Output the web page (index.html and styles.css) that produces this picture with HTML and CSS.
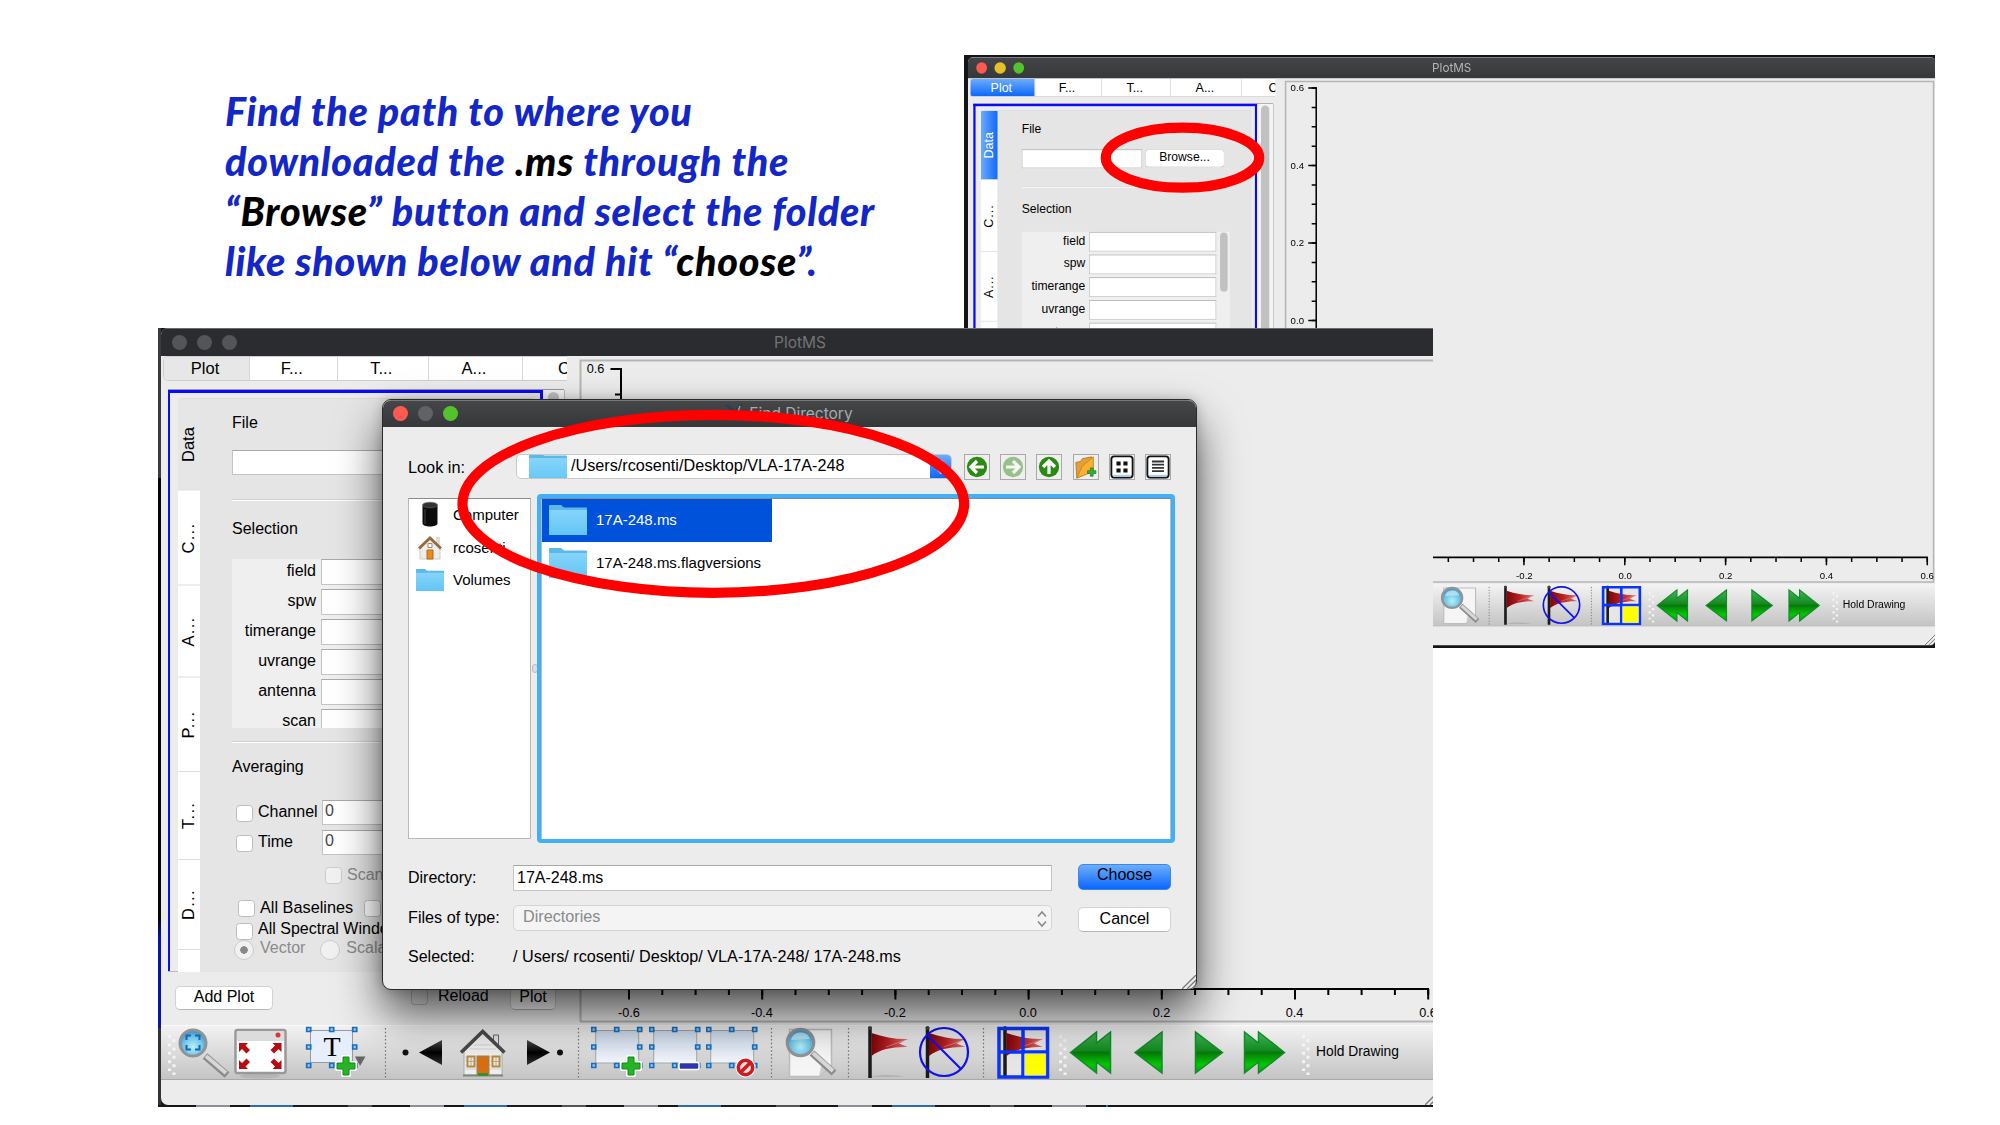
FILE: index.html
```html
<!DOCTYPE html>
<html lang="en">
<head>
<meta charset="utf-8">
<title>PlotMS: choosing a measurement set</title>
<link rel="stylesheet" href="styles.css">
</head>
<body>
<svg class="defs" width="0" height="0" aria-hidden="true">
  <defs>
    <linearGradient id="g-green" x1="0" y1="0" x2="0" y2="1">
      <stop offset="0" stop-color="#3fb457"/><stop offset=".45" stop-color="#138a1f"/><stop offset=".5" stop-color="#067a0a"/><stop offset=".8" stop-color="#05c805"/><stop offset="1" stop-color="#0a9a14"/>
    </linearGradient>
    <linearGradient id="g-red" x1="0" y1="0" x2="1" y2="0">
      <stop offset="0" stop-color="#7d0507"/><stop offset=".45" stop-color="#b51f22"/><stop offset="1" stop-color="#e0706f"/>
    </linearGradient>
    <linearGradient id="g-folder" x1="0" y1="0" x2="0" y2="1">
      <stop offset="0" stop-color="#86d4fb"/><stop offset="1" stop-color="#62c5f5"/>
    </linearGradient>
    <linearGradient id="g-region" x1="0" y1="0" x2="0" y2="1">
      <stop offset="0" stop-color="#ccd9ea"/><stop offset="1" stop-color="#f2f6fb"/>
    </linearGradient>
    <linearGradient id="g-black" x1="0" y1="0" x2="0" y2="1">
      <stop offset="0" stop-color="#4a4a4a"/><stop offset=".5" stop-color="#000"/><stop offset="1" stop-color="#333"/>
    </linearGradient>
    <radialGradient id="g-lens" cx=".5" cy=".65" r=".65">
      <stop offset="0" stop-color="#b5f0fb"/><stop offset=".6" stop-color="#6cc3e6"/><stop offset="1" stop-color="#2f86bf"/>
    </radialGradient>
  </defs>
  <symbol id="i-grip" viewBox="0 0 15 54">
    <path d="M7.500 10v36" stroke="#f4f4f4" stroke-width="3" stroke-dasharray="3 5.400"/>
    <path d="M12 14v36" stroke="#f4f4f4" stroke-width="3" stroke-dasharray="3 5.400"/>
  </symbol>
  <symbol id="i-sep" viewBox="0 0 15 54">
    <path d="M7.500 3v50" stroke="#777" stroke-width="1.200" stroke-dasharray="1.500 2.200"/>
  </symbol>
  <symbol id="i-zoom" viewBox="0 0 54 54">
    <path d="M27 31l22 19" stroke="#8b8b8b" stroke-width="7"/>
    <path d="M28 31l20 17" stroke="#d6d6d6" stroke-width="4"/>
    <circle cx="15" cy="18" r="13" fill="url(#g-lens)" stroke="#8d9499" stroke-width="3"/>
    <path d="M8.500 15v-4.500h4.500M17 10.500h4.500V15M21.500 20v4.500H17M13 24.500H8.500V20" fill="none" stroke="#1a64ad" stroke-width="2"/>
  </symbol>
  <symbol id="i-fit" viewBox="0 0 60 54">
    <ellipse cx="28" cy="51" rx="20" ry="2.500" fill="#b5b5b5"/>
    <rect x="3.500" y="5" width="50" height="43" rx="2" fill="#fff" stroke="#999" stroke-width="2.500"/>
    <path d="M5 6h47v10H5z" fill="#dcdcdc"/>
    <circle cx="46" cy="10" r="2.500" fill="#d33"/>
    <path d="M7 18h9l-2.500 2.500 4.500 4.500-3.500 3.500-4.500-4.500L7 27zM49.500 18h-9l2.500 2.500-4.500 4.500 3.500 3.500 4.500-4.500 3 3zM7 44h9l-2.500-2.500 4.500-4.500-3.500-3.500-4.500 4.500L7 35zM49.500 44h-9l2.500-2.500-4.500-4.500 3.500-3.500 4.500 4.500 3-3z" fill="#b80b10"/>
  </symbol>
  <symbol id="i-handles" viewBox="0 0 52 46" overflow="visible">
    <path d="M1 2.500h4v4H1zM24 2.500h4v4h-4zM47 2.500h4v4h-4zM1 20h4v4H1zM47 20h4v4h-4zM1 38.500h4v4H1zM24 38.500h4v4h-4zM47 38.500h4v4h-4z" fill="#9ac8ee" stroke="#1671c4" stroke-width="1.700"/>
  </symbol>
  <symbol id="i-plus" viewBox="0 0 22 22">
    <path d="M8 2h6v6h6v6h-6v6H8v-6H2V8h6z" fill="#22ab22" stroke="#fff" stroke-width="4" stroke-linejoin="round"/>
    <path d="M8 2h6v6h6v6h-6v6H8v-6H2V8h6z" fill="#27b527" stroke="#0e8a14" stroke-width="1"/>
  </symbol>
  <symbol id="i-text" viewBox="0 0 86 54">
    <rect x="18.500" y="5.500" width="42" height="32" fill="#e6effb" stroke="#999"/>
    <use href="#i-handles" x="13.700" y="0" width="52" height="46"/>
    <text x="40" y="31" text-anchor="middle" class="glyph-t">T</text>
    <path d="M63 31.500h10.500L68 41z" fill="#666"/>
    <use href="#i-plus" x="43" y="30" width="22" height="22"/>
  </symbol>
  <symbol id="i-prev" viewBox="0 0 57 54">
    <circle cx="12.500" cy="27.500" r="3" fill="#111"/><path d="M26 27.500L49 15v25z" fill="url(#g-black)"/>
  </symbol>
  <symbol id="i-next" viewBox="0 0 56 54">
    <circle cx="45" cy="27.500" r="3" fill="#111"/><path d="M35 27.500L12 15v25z" fill="url(#g-black)"/>
  </symbol>
  <symbol id="i-home" viewBox="0 0 65 54">
    <path d="M43.500 20V10h5v15z" fill="#e4e4e4" stroke="#666"/>
    <path d="M14 27L32.700 8 52 27v23H14z" fill="#eee" stroke="#aaa"/>
    <path d="M15 32h36M15 36h36M15 40h36M15 44h36M20 24h26M24 20h18" stroke="#cfcfcf"/>
    <path d="M11 27.500L32.700 6.500 54.500 27.500" fill="none" stroke="#4a4a4a" stroke-width="3.500"/>
    <path d="M27.500 31.500h11V49h-11z" fill="#d96d14" stroke="#b07d35" stroke-width="2"/>
    <path d="M17.500 31.500h7v10h-7zM42.500 31.500h7v10h-7z" fill="#e3eef8" stroke="#b98a45" stroke-width="2"/>
    <path d="M21 32v9M46 32v9M18 36.500h6M43 36.500h6" stroke="#c9a466"/>
    <path d="M13 50.500h40" stroke="#7a8a7a" stroke-width="2"/><path d="M28 49.500h10" stroke="#2c8f2c" stroke-width="2.500"/>
  </symbol>
  <symbol id="i-region" viewBox="0 0 57.500 54">
    <rect x="4.700" y="5.500" width="43" height="32.500" fill="url(#g-region)" stroke="#a6a6a6"/>
    <use href="#i-handles" x="-.3" y="0" width="52" height="46"/>
  </symbol>
  <symbol id="i-add" viewBox="0 0 57.500 54"><use href="#i-region" width="57.500" height="54"/><use href="#i-plus" x="29" y="30" width="22" height="22"/></symbol>
  <symbol id="i-sub" viewBox="0 0 57.500 54"><use href="#i-region" width="57.500" height="54"/><rect x="30" y="37.500" width="20" height="7" rx="1.500" fill="#3037b5" stroke="#fff" stroke-width="1.500"/></symbol>
  <symbol id="i-no" viewBox="0 0 57.500 54"><use href="#i-region" width="57.500" height="54"/><circle cx="39.500" cy="42.500" r="10" fill="#fff"/><circle cx="39.500" cy="42.500" r="7.200" fill="#f6dede" stroke="#cc1c22" stroke-width="3.600"/><path d="M35 47l9-9" stroke="#cc1c22" stroke-width="3.600"/></symbol>
  <symbol id="i-search" viewBox="0 0 62.500 54">
    <path d="M10.500 4.500h42v36L40 51.500H10.500z" fill="#f5f5f5" stroke="#bdbdbd" stroke-width="1.500"/>
    <path d="M52.500 40L40 51.500l2-10z" fill="#ccc"/>
    <path d="M33 28l22 20" stroke="#8b8b8b" stroke-width="7"/>
    <path d="M34 28l20 18" stroke="#d8d8d8" stroke-width="4"/>
    <circle cx="21.500" cy="17.500" r="13.300" fill="url(#g-lens)" stroke="#8f9598" stroke-width="3"/>
    <path d="M12 15a10 10 0 0119-1z" fill="#c9ecf8" opacity=".7"/>
  </symbol>
  <symbol id="i-redflag" viewBox="0 0 44 54">
    <path d="M4 2v51" stroke="#1b1b1b" stroke-width="3.500"/><circle cx="4" cy="3" r="2" fill="#444"/>
    <path d="M5.500 8C18 12 30 14.500 42 14L33 18.500 42 22C28 21.500 14 24 5.500 31z" fill="url(#g-red)"/>
    <path d="M20 22l20-7" stroke="#fff" stroke-opacity=".3"/>
  </symbol>
  <symbol id="i-flag" viewBox="0 0 58 54"><path d="M14 52c14-3 26-2 34 0z" fill="#aaa" opacity=".7"/><use href="#i-redflag" x="10" y="0" width="44" height="54"/></symbol>
  <symbol id="i-unflag" viewBox="0 0 62 54"><use href="#i-redflag" x="9.500" y="0" width="44" height="54"/><circle cx="30" cy="27" r="24" fill="none" stroke="#1010f5" stroke-width="2.200"/><path d="M13 10l34 34" stroke="#1010f5" stroke-width="2.200"/></symbol>
  <symbol id="i-cells" viewBox="0 0 62 54">
    <path d="M8 3h48v48H8z" fill="#e6e6e6"/><use href="#i-redflag" x="10" y="0" width="44" height="54"/>
    <path d="M8 3.500h48.500v48.500H8zM32 3v49M8 27h48" fill="none" stroke="#0a35ff" stroke-width="3.500"/><path d="M33.700 28.800h21v21.500h-21z" fill="#ff0" stroke="#cfd8ff" stroke-width=".6"/>
  </symbol>
  <symbol id="i-first" viewBox="0 0 50 54"><path d="M2.500 27.500L28.500 7v11L42.500 7v41L28.500 37v11z" fill="url(#g-green)" stroke="#148a2c" stroke-width="1.500"/></symbol>
  <symbol id="i-back" viewBox="0 0 60 54"><path d="M17 27.500L44 7v41z" fill="url(#g-green)" stroke="#148a2c" stroke-width="1.500"/></symbol>
  <symbol id="i-fwd" viewBox="0 0 60 54"><path d="M44.500 27.500L17.500 7v41z" fill="url(#g-green)" stroke="#148a2c" stroke-width="1.500"/></symbol>
  <symbol id="i-last" viewBox="0 0 58 54"><path d="M46.500 27.500L20.500 7v11L6.500 7v41L20.500 37v11z" fill="url(#g-green)" stroke="#148a2c" stroke-width="1.500"/></symbol>
  <symbol id="i-corner" viewBox="0 0 14 14"><path d="M0 14L14 0M5 14l9-9M10 14l4-4" stroke="#777" stroke-width="1.300"/></symbol>
  <symbol id="i-folder" viewBox="0 0 38 30" preserveAspectRatio="none">
    <path d="M1 0h11l3 2.500h22a1 1 0 011 1V29a1 1 0 01-1 1H1a1 1 0 01-1-1V1a1 1 0 011-1z" fill="#5bb9ea"/>
    <path d="M0 5h38v24a1 1 0 01-1 1H1a1 1 0 01-1-1z" fill="url(#g-folder)"/>
  </symbol>
</svg>

<p class="headline">
  <span>Find the path to where you</span>
  <span>downloaded the <b>.ms</b> through the</span>
  <span>“<b>Browse</b>” button and select the folder</span>
  <span>like shown below and hit “<b>choose</b>”.</span>
</p>

<section class="shot shot-back">
  <div class="window active">
    <header class="titlebar"><i class="dot red"></i><i class="dot yellow"></i><i class="dot green"></i><span class="title">PlotMS</span></header>
    <div class="body">
      <div class="side">
        <nav class="tabs"><span class="on">Plot</span><span>F...</span><span>T...</span><span>A...</span><span class="cut">C</span></nav>
        <div class="panel">
          <div class="frame">
            <div class="vtabs"><span class="on">Data</span><span>C...</span><span>A...</span><span>P...</span></div>
            <div class="content">
              <h3>File</h3>
              <div class="file"><i class="input"></i><span class="button browse">Browse...</span></div>
              <hr>
              <h3 class="sel">Selection</h3>
              <div class="fields">
                <div class="rows">
                  <label>field<i class="input"></i></label><label>spw<i class="input"></i></label><label>timerange<i class="input"></i></label><label>uvrange<i class="input"></i></label><label>antenna<i class="input"></i></label><label>scan<i class="input"></i></label>
                </div>
                <i class="thumb"></i>
              </div>
            </div>
          </div>
          <div class="scroll"><i></i></div>
        </div>
      </div>
      <svg class="plot" width="871" height="669">
        <path d="M12.500 666V4.500H868.500V665.500H12.500" fill="none" stroke="#b5b5b5" stroke-width="2"/>
        <path d="M53 12V633H861" fill="none" stroke="#000" stroke-width="2"/>
        <path d="M50 12V634" stroke="#000" stroke-width="6" stroke-dasharray="2 23.600"/>
        <path d="M48 12V634" stroke="#000" stroke-width="11" stroke-dasharray="2 100.400"/>
        <path d="M60 636H863" stroke="#000" stroke-width="6" stroke-dasharray="2 31.300"/>
        <path d="M60 638.500H863" stroke="#000" stroke-width="10" stroke-dasharray="2 131.200"/>
        <g class="ticks"><text x="28" y="17">0.6</text><text x="28" y="119.500">0.4</text><text x="28" y="221.500">0.2</text><text x="28" y="324.500">0.0</text>
        <text x="328" y="661">-0.2</text><text x="461" y="661">0.0</text><text x="594" y="661">0.2</text><text x="727" y="661">0.4</text><text x="860" y="661">0.6</text></g>
      </svg>
    </div>
    <div class="toolbar short">
      <svg style="--w:62.5"><use href="#i-search"/></svg><svg style="--w:15"><use href="#i-sep"/></svg>
      <svg style="--w:58"><use href="#i-flag"/></svg><svg style="--w:62"><use href="#i-unflag"/></svg><svg style="--w:15"><use href="#i-sep"/></svg>
      <svg style="--w:62"><use href="#i-cells"/></svg><svg style="--w:15"><use href="#i-grip"/></svg>
      <svg style="--w:50"><use href="#i-first"/></svg><svg style="--w:60"><use href="#i-back"/></svg><svg style="--w:60"><use href="#i-fwd"/></svg><svg style="--w:58"><use href="#i-last"/></svg>
      <svg style="--w:15"><use href="#i-grip"/></svg><span class="hold">Hold Drawing</span>
    </div>
    <footer class="status"><svg width="14" height="14"><use href="#i-corner"/></svg></footer>
  </div>
</section>

<section class="shot shot-front">
  <div class="window">
    <header class="titlebar"><i class="dot"></i><i class="dot"></i><i class="dot"></i><span class="title">PlotMS</span></header>
    <div class="body">
      <div class="side">
        <nav class="tabs"><span class="on">Plot</span><span>F...</span><span>T...</span><span>A...</span><span class="cut">C</span></nav>
        <div class="panel">
          <div class="frame">
            <div class="vtabs"><span class="on">Data</span><span>C...</span><span>A...</span><span>P...</span><span>T...</span><span>D...</span><span></span></div>
            <div class="content">
              <h3>File</h3>
              <div class="file"><i class="input"></i></div>
              <hr>
              <h3 class="sel">Selection</h3>
              <div class="fields">
                <div class="rows">
                  <label>field<i class="input"></i></label><label>spw<i class="input"></i></label><label>timerange<i class="input"></i></label><label>uvrange<i class="input"></i></label><label>antenna<i class="input"></i></label><label>scan<i class="input"></i></label>
                </div>
              </div>
              <hr class="second">
              <h3 class="avg">Averaging</h3>
              <div class="opt num"><i class="box"></i><span>Channel</span><i class="input">0</i></div>
              <div class="opt num"><i class="box"></i><span>Time</span><i class="input">0</i></div>
              <div class="opt scan off"><i class="box"></i><span>Scan</span></div>
              <div class="opt base"><i class="box"></i><span>All Baselines</span><i class="box"></i></div>
              <div class="opt spec"><i class="box"></i><span>All Spectral Windows</span></div>
              <div class="opt mode off"><i class="radio picked"></i><span>Vector</span><i class="radio"></i><span>Scalar</span></div>
            </div>
          </div>
          <div class="scroll"><i></i></div>
        </div>
        <div class="actions"><span class="button">Add Plot</span><i class="box"></i><span class="reload">Reload</span><span class="button go">Plot</span></div>
      </div>
      <svg class="plot" width="871" height="669">
        <path d="M12.500 666V4.500H868.500V665.500H12.500" fill="none" stroke="#b5b5b5" stroke-width="2"/>
        <path d="M53 12V633H861" fill="none" stroke="#000" stroke-width="2"/>
        <path d="M50 12V634" stroke="#000" stroke-width="6" stroke-dasharray="2 23.600"/>
        <path d="M48 12V634" stroke="#000" stroke-width="11" stroke-dasharray="2 100.400"/>
        <path d="M60 636H863" stroke="#000" stroke-width="6" stroke-dasharray="2 31.300"/>
        <path d="M60 638.500H863" stroke="#000" stroke-width="10" stroke-dasharray="2 131.200"/>
        <g class="ticks"><text x="27.500" y="16.500">0.6</text>
        <text x="61" y="660.500">-0.6</text><text x="194" y="660.500">-0.4</text><text x="327" y="660.500">-0.2</text><text x="460" y="660.500">0.0</text><text x="593.500" y="660.500">0.2</text><text x="726.500" y="660.500">0.4</text><text x="860" y="660.500">0.6</text></g>
      </svg>
    </div>
    <div class="toolbar">
      <svg style="--w:17"><use href="#i-grip"/></svg><svg style="--w:54"><use href="#i-zoom"/></svg><svg style="--w:60"><use href="#i-fit"/></svg><svg style="--w:86"><use href="#i-text"/></svg><svg style="--w:15"><use href="#i-sep"/></svg>
      <svg style="--w:57"><use href="#i-prev"/></svg><svg style="--w:65"><use href="#i-home"/></svg><svg style="--w:56"><use href="#i-next"/></svg><svg class="gap" style="--w:15"><use href="#i-sep"/></svg>
      <svg style="--w:57.5"><use href="#i-add"/></svg><svg style="--w:57.5"><use href="#i-sub"/></svg><svg style="--w:57.5"><use href="#i-no"/></svg><svg style="--w:15"><use href="#i-sep"/></svg>
      <svg style="--w:62.5"><use href="#i-search"/></svg><svg style="--w:15"><use href="#i-sep"/></svg>
      <svg style="--w:58"><use href="#i-flag"/></svg><svg style="--w:62"><use href="#i-unflag"/></svg><svg style="--w:15"><use href="#i-sep"/></svg>
      <svg style="--w:62"><use href="#i-cells"/></svg><svg style="--w:15"><use href="#i-grip"/></svg>
      <svg style="--w:50"><use href="#i-first"/></svg><svg style="--w:60"><use href="#i-back"/></svg><svg style="--w:60"><use href="#i-fwd"/></svg><svg style="--w:58"><use href="#i-last"/></svg>
      <svg style="--w:15"><use href="#i-grip"/></svg><span class="hold">Hold Drawing</span>
    </div>
    <footer class="status"><svg width="14" height="14"><use href="#i-corner"/></svg></footer>
  </div>

  <div class="dialog">
    <header class="titlebar"><i class="dot red"></i><i class="dot"></i><i class="dot green"></i>
      <span class="title"><svg width="18" height="17" viewBox="0 0 18 17"><path d="M0 1c5 0 7 3 9 7 1-4 3-7 8-8-2 4-4 7-6 9l2 7c-3-1-4-3-5-5-2 3-4 5-7 5 2-3 4-5 4-7C4 6 2 3 0 1z" fill="#1f4257"/><path d="M9 16l5-14" stroke="#98a0a5" stroke-width="1.500"/></svg>Find Directory</span></header>
    <div class="look">
      <span class="lbl">Look in:</span>
      <div class="combo"><svg width="38" height="25"><use href="#i-folder" y="-2" width="38" height="30"/></svg><span>/Users/rcosenti/Desktop/VLA-17A-248</span><i class="arrows"><svg width="10" height="16" viewBox="0 0 10 16"><path d="M1.500 6L5 2l3.500 4M1.500 10L5 14l3.500-4" fill="none" stroke="#fff" stroke-width="1.700"/></svg></i></div>
      <div class="tools">
        <i><svg viewBox="0 0 26 26"><circle cx="13" cy="13" r="11" fill="#2b8a12"/><path d="M20.500 13H8M13 6.500L6.500 13l6.500 6.500" fill="none" stroke="#fff" stroke-width="3.500"/></svg></i>
        <i class="dim"><svg viewBox="0 0 26 26"><circle cx="13" cy="13" r="11" fill="#2b8a12"/><path d="M5.500 13H18M13 6.500l6.500 6.500-6.500 6.500" fill="none" stroke="#fff" stroke-width="3.500"/></svg></i>
        <i><svg viewBox="0 0 26 26"><circle cx="13" cy="13" r="11" fill="#2b8a12"/><path d="M13 20.500V8M6.500 13L13 6.500l6.500 6.500" fill="none" stroke="#fff" stroke-width="3.500"/></svg></i>
        <i><svg viewBox="0 0 26 26"><path d="M3 25L2 8l5-1 2-3 10-2 2 15z" fill="#e3a03a" stroke="#a86a10" stroke-width=".8"/><path d="M3 25l6-13L21 2v16z" fill="#fbb02e" stroke="#b97a18" stroke-width=".8"/><path d="M17.700 14h3v3h3v3h-3v3h-3v-3h-3v-3h3z" fill="#3cab3c" stroke="#1d8126" stroke-width=".8"/></svg></i>
        <i><svg viewBox="0 0 26 26"><rect x="1.500" y="1.500" width="23" height="23" rx="3" fill="#fff" stroke="#111" stroke-width="2"/><path d="M3.500 22.500h19" stroke="#a5cdee" stroke-width="2"/><path d="M7 7h4.500v4.500H7zM14.500 7H19v4.500h-4.500zM7 14.500h4.500V19H7zM14.500 14.500H19V19h-4.500z" fill="#111"/></svg></i>
        <i><svg viewBox="0 0 26 26"><rect x="1.500" y="1.500" width="23" height="23" rx="3" fill="#fff" stroke="#111" stroke-width="2"/><path d="M3.500 22.500h19" stroke="#a5cdee" stroke-width="2"/><path d="M6.500 7h13M6.500 10.500h13M6.500 14h13M6.500 17.500h13" stroke="#333" stroke-width="2"/></svg></i>
      </div>
    </div>
    <div class="lists">
      <ul class="places">
        <li><svg width="30" height="28" viewBox="0 0 30 28"><path d="M7.500 4v18.500c0 4 15 4 15 0V4z" fill="#0c0c0c"/><ellipse cx="15" cy="4" rx="7.500" ry="2.800" fill="#333" stroke="#666" stroke-width=".6"/><path d="M10 8v15" stroke="#444"/></svg>Computer</li>
        <li><svg width="30" height="28" viewBox="0 0 30 28"><path d="M5 12L15 4l10 8v13H5z" fill="#ededed" stroke="#ccc"/><path d="M21 3h4v8l-4-3z" fill="#ddd"/><path d="M4 14.500L15 4l11 10.500" fill="none" stroke="#97693a" stroke-width="2.800"/><path d="M12 16h6v9h-6z" fill="#f08a10" stroke="#a46a30"/><path d="M13 9.500h4v4h-4z" fill="#fff" stroke="#9a8a7a"/></svg>rcosenti</li>
        <li><svg width="30" height="24"><use href="#i-folder" x="1" y="1" width="28" height="22"/></svg>Volumes</li>
      </ul>
      <div class="split"><i></i></div>
      <ul class="files">
        <li class="on"><svg width="38" height="30"><use href="#i-folder" width="38" height="30"/></svg>17A-248.ms</li>
        <li><svg width="38" height="30"><use href="#i-folder" width="38" height="30"/></svg>17A-248.ms.flagversions</li>
      </ul>
    </div>
    <div class="form">
      <span>Directory:</span><i class="input">17A-248.ms</i><span class="button choose">Choose</span>
      <span class="kind">Files of type:</span><div class="type">Directories<svg width="10" height="18" viewBox="0 0 10 18"><path d="M1 6.500L5 2l4 4.500M1 11.500L5 16l4-4.500" fill="none" stroke="#8a8a8a" stroke-width="1.600"/></svg></div><span class="button cancel">Cancel</span>
      <span class="picked-label">Selected:</span><span class="path">/ Users/ rcosenti/ Desktop/ VLA-17A-248/ 17A-248.ms</span>
    </div>
    <svg class="corner" width="14" height="14"><use href="#i-corner"/></svg>
  </div>
</section>

<svg class="marks" width="2000" height="1125">
  <ellipse cx="1182.500" cy="157.700" rx="76.700" ry="30"/>
  <ellipse cx="713.300" cy="503.800" rx="250.800" ry="89"/>
</svg>
</body>
</html>
```

FILE: styles.css
```css
* { box-sizing: border-box; }
body {
  margin: 0; width: 2000px; height: 1125px; position: relative; overflow: hidden;
  background: #fff; color: #000; font: 16px/20px "Liberation Sans", Arial, sans-serif;
}
i { font-style: normal; }
svg { display: block; flex: none; }
.defs { position: absolute; }
h3 { margin: 0; font: inherit; }
ul { margin: 0; padding: 0; list-style: none; }

/* Instruction text */
.headline {
  position: absolute; left: 225px; top: 86px; margin: 0; white-space: nowrap;
  font: italic 900 39.500px/50px Lato, sans-serif; color: #1327c8;
  letter-spacing: .75px; font-variant-ligatures: none;
}
.headline span { display: block; }
.headline b { color: #000; font-weight: inherit; }

/* Screenshots on the slide */
.shot { position: absolute; overflow: hidden; }
.shot-back { left: 964px; top: 55px; width: 971px; height: 593px; background: #141517; padding: 2px 0 0 3.700px; }
.shot-front {
  left: 158px; top: 328px; width: 1275px; height: 779px; padding-left: 3px;
  background:
    repeating-linear-gradient(90deg, #16171b 0 38px, #8b9096 38px 72px, #16171b 72px 92px, #2b6cb0 92px 135px, #1a1b20 135px 190px, #555 190px 214px) 0 100% / 950px 2px no-repeat,
    linear-gradient(#3a3b3d 0 150px, #050505 150px 590px, #0a12b0 610px 700px, #30343a 700px) 0 0 / 3px 100% no-repeat,
    #16171b;
}
.shot-back .window { transform: scale(.757); transform-origin: 0 0; }

/* Plot window */
.window { width: 1278px; height: 777px; background: #ececec; border-radius: 7px; overflow: hidden; display: flex; flex-direction: column; }
.titlebar { position: relative; height: 28px; flex: none; display: flex; align-items: center; gap: 10px; padding-left: 10.500px; background: #2b2c2f; border-top: 1px solid #6a6b6d; }
.dot { width: 15px; height: 15px; border-radius: 50%; background: #545558; }
.title { position: absolute; left: 0; right: 0; text-align: center; font-family: Inter, sans-serif; font-size: 15.500px; color: #727376; }
.active .titlebar { background: linear-gradient(#444548, #37383a); }
.active .title { color: #b4b5b6; }
.dot.red { background: #ff5a52; }
.dot.yellow { background: #e6c02a; }
.dot.green { background: #53c22c; }
.active .dot { width: 14.500px; height: 14.500px; }
.body { display: flex; height: 669px; flex: none; }
.side { width: 407px; }
.tabs { display: grid; grid-template-columns: 85px 87.500px 91.500px 94px 46px; height: 25px; margin: 0 1px 0 2px; background: #fff; border: 1px solid #cfcfcf; border-right: 0; border-radius: 5px 0 0 5px; overflow: hidden; font-size: 16.500px; line-height: 22px; text-align: center; }
.tabs span { padding-right: 3px; }
.tabs span + span { border-left: 1px solid #d8d8d8; }
.tabs .on { background: #e7e7e7; }
.tabs .cut { padding: 0 0 0 35px; text-align: left; overflow: hidden; }
.active .tabs .on { background: linear-gradient(#6cacfb, #0a66fe); color: #fff; }
.panel { display: flex; height: 583px; margin: 8px 4px 0 7px; border-top: 1px solid #999; border-bottom: 1px solid #bbb; }
.frame { width: 375px; flex: none; border: solid #0a0aff; border-width: 3px 3px 0 2.500px; padding: 5px 0 0 8px; display: flex; }
.active .frame { border-width: 3px 3px 0; padding-left: 7px; }
.scroll { flex: 1; padding: 2px 5px; background: #f4f4f4; border-right: 1px solid #bbb; }
.scroll i { display: block; width: 11px; height: 572px; border-radius: 6px; background: #c1c1c1; }
.vtabs { width: 22px; height: 574px; display: grid; grid-template-rows: 92px 94.500px 92.500px 93.500px 88px 90px 24px; background: #fff; overflow: hidden; border-radius: 4px 0 0 0; }
.vtabs span { writing-mode: vertical-rl; transform: rotate(180deg); text-align: center; line-height: 20px; border-bottom: 1px solid #ddd; font-size: 16.500px; padding-left: 3px; letter-spacing: 1.300px; }
.vtabs .on { background: #e6e6e6; letter-spacing: 0; }
.active .vtabs .on { background: linear-gradient(to left, #6cacfb, #0a66fe); color: #fff; }
.content { width: 336px; height: 574px; padding: 14px 29px 0 32px; background: #e5e5e5; border-top: 1px solid #dadada; border-radius: 0 5px 0 0; overflow: hidden; white-space: nowrap; }
.input { display: block; background: #fff; border: 1px solid #c4c4c4; border-top-color: #a9a9a9; border-width: 1.500px; }
.file { display: flex; gap: 4px; margin-top: 17px; }
.file .input { width: 158.500px; height: 25px; }
.button { display: block; height: 24px; background: #fff; border: 1px solid #d2d2d2; border-bottom-color: #b5b5b5; border-radius: 5px; text-align: center; font-size: 16px; line-height: 19px; }
.browse { width: 105px; }
hr { margin: 24px 0 0; height: 2px; border: 0; border-top: 1px solid #d0d0d0; background: #fff; }
.sel { margin-top: 18px; }
.fields { display: flex; height: 169px; margin-top: 20px; background: #efefef; overflow: hidden; }
.rows { width: 257px; }
.rows label { display: flex; justify-content: flex-end; gap: 5px; height: 30px; line-height: 24px; }
.rows .input { width: 168px; height: 25.500px; }
.thumb { width: 10px; height: 78px; margin: 1px 0 0 5px; border-radius: 5px; background: #c1c1c1; }
.second { margin-top: 13px; }
.avg { margin: 14px 0 20px; }
.opt { display: flex; align-items: center; padding-left: 4px; }
.opt.off { color: #8a8a8a; }
.box { width: 17px; height: 17px; flex: none; background: #fff; border: 1px solid #bdbdbd; border-radius: 3.500px; margin-top: 2px; }
.off .box, .off .radio { background: #f1f1f1; border-color: #ccc; }
.opt .box + span { margin-left: 5px; }
.num { height: 30px; }
.num span { width: 64px; }
.num .input { width: 160px; height: 25px; line-height: 20px; padding-left: 2px; color: #444; font-size: 16px; }
.scan { height: 35px; padding-left: 93px; }
.base { height: 30px; padding-left: 6px; font-size: 16.300px; }
.base .box + span { margin-right: 11px; }
.spec { height: 16px; }
.spec span { margin-top: -2px; }
.mode { height: 24px; padding-left: 2px; }
.radio { width: 20px; height: 20px; border: 1px solid #aaa; border-radius: 50%; flex: none; }
.mode span { margin: -5px 15px 0 6px; }
.off .picked { background: radial-gradient(circle, #888 0 3.500px, #f1f1f1 4px); }
.actions { display: flex; padding: 14px 0 0 14px; }
.actions .button { width: 98px; height: 24px; line-height: 20px; }
.actions .box { margin: 2px 0 0 138px; background: #ececec; }
.reload { margin-left: 10px; width: 72px; line-height: 20px; }
.actions .go { width: 46px; }
.plot { overflow: hidden; }
.ticks { font-size: 12.700px; text-anchor: middle; }

.toolbar { height: 55px; flex: none; display: flex; background: linear-gradient(#f2f2f2, #c4c4c4); border-top: 1px solid #fafafa; border-bottom: 1.500px solid #a8a8a8; }
.toolbar svg { width: calc(var(--w) * 1px); height: 54px; margin-top: -1px; }
.toolbar .gap { margin-right: 5px; }
.toolbar.short { padding-left: 618px; }
.hold { padding: 16px 0 0 5px; font-size: 13.800px; }
.glyph-t { font: 28px "Liberation Serif", serif; }
.status { flex: 1; display: flex; justify-content: flex-end; align-items: flex-end; }

/* Find Directory dialog */
.dialog { position: absolute; left: 224px; top: 71px; width: 815px; height: 591px; background: #ececec; border-radius: 9px; border: 1px solid #2a2a2a; box-shadow: 0 24px 45px rgba(0, 0, 0, .65), 0 0 12px rgba(0, 0, 0, .2); }
.dialog .titlebar { height: 27px; background: linear-gradient(#454648, #363739); border-radius: 8px 8px 0 0; border-top-color: #77787a; padding-left: 10px; }
.dialog .titlebar .dot { background: #616265; margin-top: -2px; }
.dialog .titlebar .red { background: #ff5a52; }
.dialog .titlebar .green { background: #53c22c; }
.dialog .title { display: flex; justify-content: center; gap: 5px; color: #a9aaac; }
.look { display: flex; height: 26px; margin: 27px 0 0 25px; }
.lbl { width: 108px; line-height: 26px; font-size: 16.300px; }
.combo { display: flex; width: 436px; height: 25px; margin-right: 12px; padding-left: 12px; background: #fff; border: 1px solid #c8c8c8; border-radius: 5px; overflow: hidden; line-height: 20px; font-size: 16.200px; }
.combo span { flex: 1; padding-left: 4px; }
.arrows { width: 21px; padding: 4px 6px; background: linear-gradient(#6cacfb, #0a66fe); }
.tools { display: flex; gap: 10.200px; }
.tools i { width: 26px; height: 26px; border: 1px solid #a9a9a9; background: #efefef; }
.tools svg { width: 24px; height: 24px; }
.dim svg { opacity: .45; }
.lists { display: flex; margin: 14px 0 0 25px; font-size: 15px; }
.places { width: 123px; height: 341px; margin: 4px 1px 0 0; background: #fff; border: 1px solid #b8b8b8; border-top-color: #8c8c8c; padding: 0 0 0 6px; }
.places li { display: flex; align-items: center; gap: 8px; height: 32.500px; }
.split { width: 5px; padding-top: 170px; }
.split i { display: block; width: 6px; height: 9px; border: 1px solid #bbb; border-radius: 4px; background: #ddd; }
.files { width: 638px; height: 349px; background: #fff; border: 4px solid #40b0fb; border-radius: 4px; padding: 1px 0 0 1px; box-shadow: inset 0 1px #888, inset 1px 0 #bbb, inset -1px 0 #bbb; }
.files li { display: flex; align-items: center; gap: 9px; width: 229.500px; height: 42.500px; padding-left: 7px; white-space: nowrap; }
.files .on { background: #0052da; color: #fff; }
.form { display: grid; grid-template-columns: 105px 539px 93px; grid-template-rows: 27px 27px 20px; row-gap: 14px; margin: 21px 0 0 25px; line-height: 27px; }
.form .input { height: 26px; margin-top: 1px; padding-left: 3px; line-height: 23px; }
.form .kind { line-height: 25px; font-size: 16.200px; }
.form .button { margin-left: 26px; width: 93px; height: 26px; line-height: 20px; }
.form .choose { background: linear-gradient(#6caefb, #0a66fe); border-color: #3a86f5; }
.form .cancel { margin-top: 2px; line-height: 21px; height: 25px; }
.type { display: flex; justify-content: space-between; height: 26px; line-height: 21px; padding: 0 4px 0 9px; color: #8a8a8a; background: #f4f4f4; border: 1px solid #d5d5d5; border-radius: 5px; font-size: 16.200px; }
.type svg { margin-top: 4px; }
.picked-label { line-height: 21px; }
.path { line-height: 21px; font-size: 16.200px; }
.corner { position: absolute; right: 0; bottom: 0; }

/* Red highlight rings */
.marks { position: absolute; left: 0; top: 0; fill: none; stroke: #f00; stroke-width: 10.200px; pointer-events: none; }
```
